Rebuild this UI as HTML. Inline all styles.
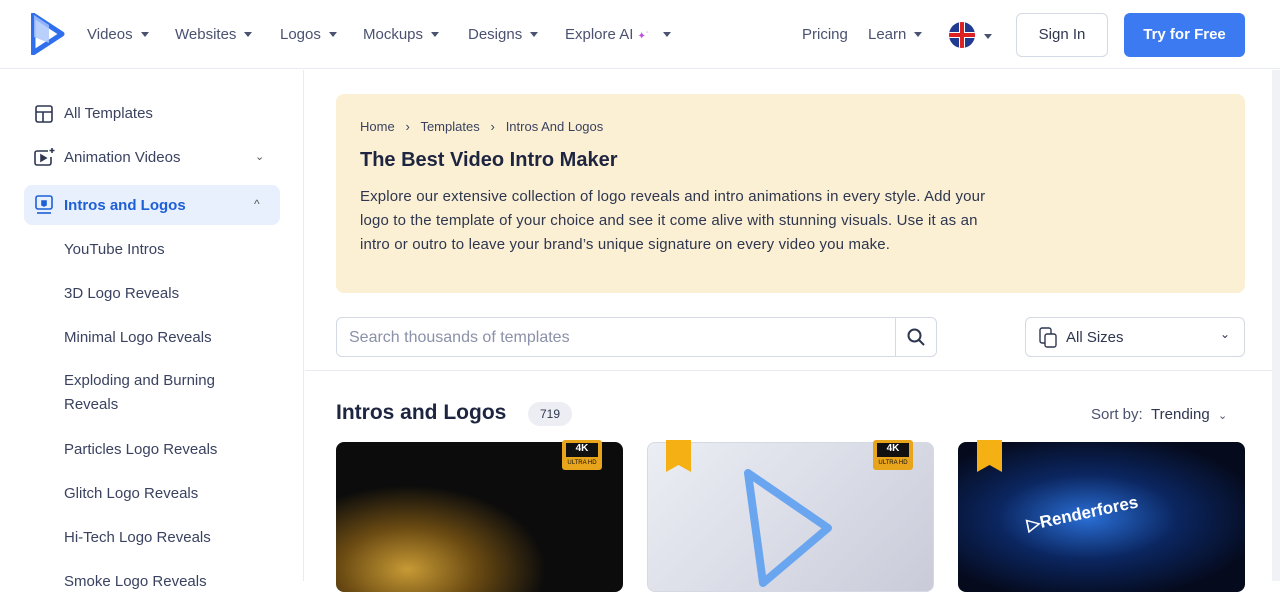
<!DOCTYPE html>
<html><head><meta charset="utf-8"><style>
*{box-sizing:border-box;margin:0;padding:0}
body{width:1280px;height:581px;overflow:hidden;background:#fff;font-family:"Liberation Sans",sans-serif;color:#2e3650;position:relative}
.hdr{position:absolute;left:0;top:0;width:1280px;height:69px;border-bottom:1px solid #e8ebf2;background:#fff}
.nav{position:absolute;top:26px;font-size:15px;color:#4a5270}
.car{display:inline-block;width:0;height:0;border-left:4px solid transparent;border-right:4px solid transparent;border-top:5px solid #4a5270;margin-left:8px;vertical-align:2px}
.side{position:absolute;left:0;top:70px;width:304px;height:511px;border-right:1px solid #e8ebf2}
.si{position:absolute;left:64px;font-size:15px;color:#3a4260}
</style></head><body>
<div class="hdr">
<svg style="position:absolute;left:31px;top:13px" width="34" height="42" viewBox="0 0 34 42"><path d="M2 2 L31 21 L2 40 Z" fill="none" stroke="#2f6fee" stroke-width="5" stroke-linejoin="round"/><path d="M3 2 L18 12 L18 30 L3 24 Z" fill="#a9c4fb" opacity=".8"/></svg>
<div class="nav" style="left:87px">Videos<span class="car"></span></div>
<div class="nav" style="left:175px">Websites<span class="car"></span></div>
<div class="nav" style="left:280px">Logos<span class="car"></span></div>
<div class="nav" style="left:363px">Mockups<span class="car"></span></div>
<div class="nav" style="left:468px">Designs<span class="car"></span></div>
<div class="nav" style="left:565px">Explore AI <span style="color:#c04be0;font-size:10px">✦˙</span><span class="car" style="margin-left:14px"></span></div>
<div class="nav" style="left:802px">Pricing</div>
<div class="nav" style="left:868px">Learn<span class="car"></span></div>
<div style="position:absolute;left:949px;top:22px;width:26px;height:26px;border-radius:50%;background:#1f3a8f;overflow:hidden"><div style="position:absolute;left:10px;top:0;width:6px;height:26px;background:#fff"></div><div style="position:absolute;top:10px;left:0;width:26px;height:6px;background:#fff"></div><div style="position:absolute;left:11px;top:0;width:4px;height:26px;background:#d22"></div><div style="position:absolute;top:11px;left:0;width:26px;height:4px;background:#d22"></div></div>
<span class="car" style="position:absolute;left:976px;top:34px"></span>
<div style="position:absolute;left:1016px;top:13px;width:92px;height:44px;border:1px solid #d5d9e3;border-radius:6px;font-size:15px;text-align:center;line-height:42px;color:#2e3650">Sign In</div>
<div style="position:absolute;left:1124px;top:13px;width:121px;height:44px;background:#3b7af0;border-radius:6px;font-size:15px;text-align:center;line-height:44px;color:#fff;font-weight:bold">Try for Free</div>
</div>
<div style="position:absolute;right:0;top:70px;width:8px;height:511px;background:#f1f2f5"></div>
<div class="side">
<svg style="position:absolute;left:35px;top:35px" width="18" height="18" viewBox="0 0 18 18" fill="none" stroke="#2e3650" stroke-width="1.6"><rect x="1" y="1" width="16" height="16" rx="2"/><path d="M1 7H17M8 7V17"/></svg>
<div class="si" style="top:35px">All Templates</div>
<svg style="position:absolute;left:34px;top:77px" width="22" height="20" viewBox="0 0 22 20" fill="none" stroke="#2e3650" stroke-width="1.6"><path d="M14 4H3a2 2 0 0 0-2 2v10a2 2 0 0 0 2 2h12a2 2 0 0 0 2-2V10"/><path d="M7 8l5 3-5 3z" fill="#2e3650"/><path d="M18 1v5M15.5 3.5h5"/></svg>
<div class="si" style="top:79px">Animation Videos</div>
<div style="position:absolute;left:255px;top:80px;font-size:11px;color:#555">⌄</div>
<div style="position:absolute;left:24px;top:115px;width:256px;height:40px;background:#e8f0fe;border-radius:8px"></div>
<svg style="position:absolute;left:35px;top:125px" width="18" height="20" viewBox="0 0 18 20" fill="none" stroke="#1d5fd6" stroke-width="1.6"><rect x="1" y="1" width="16" height="13" rx="2"/><path d="M7 6h4v4l-2 1-2-1z" fill="#1d5fd6"/><path d="M2 18h14"/></svg>
<div class="si" style="top:127px;color:#1d5fd6;font-weight:bold">Intros and Logos</div>
<div style="position:absolute;left:254px;top:127px;font-size:12px;color:#555">^</div>
<div class="si" style="top:171px">YouTube Intros</div>
<div class="si" style="top:215px">3D Logo Reveals</div>
<div class="si" style="top:259px">Minimal Logo Reveals</div>
<div class="si" style="line-height:24px;top:299px">Exploding and Burning<br>Reveals</div>
<div class="si" style="top:371px">Particles Logo Reveals</div>
<div class="si" style="top:415px">Glitch Logo Reveals</div>
<div class="si" style="top:459px">Hi-Tech Logo Reveals</div>
<div class="si" style="top:503px">Smoke Logo Reveals</div>
</div>
<div style="position:absolute;left:336px;top:94px;width:909px;height:199px;background:#fbf0d3;border-radius:8px">
<div style="position:absolute;left:24px;top:25px;font-size:13px;color:#3a4260">Home &nbsp;&nbsp;›&nbsp;&nbsp; Templates &nbsp;&nbsp;›&nbsp;&nbsp; Intros And Logos</div>
<div style="position:absolute;left:24px;top:55px;font-size:20px;font-weight:bold;color:#1e2540">The Best Video Intro Maker</div>
<div style="position:absolute;left:24px;top:91px;width:640px;font-size:15px;line-height:24px;color:#2e3650;letter-spacing:0.15px">Explore our extensive collection of logo reveals and intro animations in every style. Add your logo to the template of your choice and see it come alive with stunning visuals. Use it as an intro or outro to leave your brand’s unique signature on every video you make.</div>
</div>
<div style="position:absolute;left:336px;top:317px;width:601px;height:40px;border:1px solid #d5d9e3;border-radius:6px"><div style="position:absolute;left:12px;top:11px;font-size:16px;color:#8a91a8">Search thousands of templates</div><div style="position:absolute;left:558px;top:0;width:1px;height:38px;background:#d5d9e3"></div>
<svg style="position:absolute;left:570px;top:10px" width="18" height="18" viewBox="0 0 18 18" fill="none" stroke="#2e3650" stroke-width="2"><circle cx="7.5" cy="7.5" r="6"/><path d="M12 12l5 5"/></svg></div>
<div style="position:absolute;left:1025px;top:317px;width:220px;height:40px;border:1px solid #d5d9e3;border-radius:6px"><svg style="position:absolute;left:13px;top:9px" width="18" height="21" viewBox="0 0 18 21" fill="none" stroke="#2e3650" stroke-width="1.4"><rect x="1" y="1" width="11" height="15" rx="2"/><rect x="6" y="7" width="11" height="13" rx="2" fill="#fff"/></svg><div style="position:absolute;left:40px;top:11px;font-size:15px">All Sizes</div><div style="position:absolute;left:194px;top:9px;font-size:12px">⌄</div></div>
<div style="position:absolute;left:305px;top:370px;width:967px;height:1px;background:#e8ebf2"></div>
<div style="position:absolute;left:336px;top:401px;font-size:21px;font-weight:bold;color:#1e2540">Intros and Logos</div>
<div style="position:absolute;left:528px;top:402px;width:44px;height:24px;border-radius:12px;background:#eceef4;font-size:12px;text-align:center;line-height:24px">719</div>
<div style="position:absolute;left:1091px;top:406px;font-size:15px;color:#4a5270">Sort by: &nbsp;<span style="color:#2e3650">Trending</span> &nbsp;<span style="font-size:11px">⌄</span></div>
<div style="position:absolute;left:336px;top:442px;width:287px;height:150px;border-radius:8px;background:radial-gradient(ellipse 60% 70% at 25% 85%,#c79a35 0%,#6a4a12 40%,#0c0c0c 80%),#0c0c0c"></div>
<div style="position:absolute;left:647px;top:442px;width:287px;height:150px;border-radius:8px;background:linear-gradient(135deg,#eceef5,#c9cbd9);border:1px solid #d5d9e3"><svg style="position:absolute;left:95px;top:25px" width="95" height="120" viewBox="0 0 95 120"><path d="M5 5 L85 60 L20 115 Z" fill="none" stroke="#6aa6f0" stroke-width="8" stroke-linejoin="round"/></svg></div>
<div style="position:absolute;left:958px;top:442px;width:287px;height:150px;border-radius:8px;background:radial-gradient(ellipse at 45% 50%,#2a6fd6 0%,#0b2660 40%,#050a1c 80%)"><div style="position:absolute;left:68px;top:62px;color:#fff;font-weight:bold;font-size:17px;transform:rotate(-12deg)">▷Renderfores</div></div>
<div style="position:absolute;left:562px;top:440px;width:40px;height:30px;background:#e8a41a;border-radius:3px"><div style="margin:3px 4px;height:14px;background:#111;color:#fff;font-size:10px;font-weight:bold;text-align:center">4K</div><div style="font-size:6px;text-align:center;color:#111">ULTRA HD</div></div>
<div style="position:absolute;left:873px;top:440px;width:40px;height:30px;background:#e8a41a;border-radius:3px"><div style="margin:3px 4px;height:14px;background:#111;color:#fff;font-size:10px;font-weight:bold;text-align:center">4K</div><div style="font-size:6px;text-align:center;color:#111">ULTRA HD</div></div>
<div style="position:absolute;left:666px;top:440px;width:25px;height:32px;background:#f5b014;clip-path:polygon(0 0,100% 0,100% 100%,50% 78%,0 100%)"></div>
<div style="position:absolute;left:977px;top:440px;width:25px;height:32px;background:#f5b014;clip-path:polygon(0 0,100% 0,100% 100%,50% 78%,0 100%)"></div>
</body></html>
